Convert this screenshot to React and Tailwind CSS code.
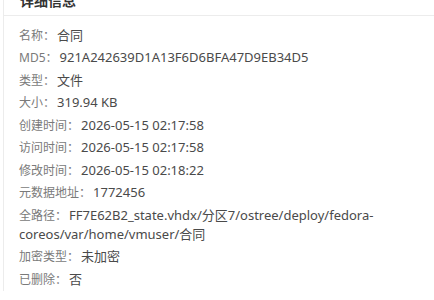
import React from "react";

const rows = [
  { label: "名称：", value: "合同" },
  { label: "MD5：", value: "921A242639D1A13F6D6BFA47D9EB34D5" },
  { label: "类型：", value: "文件" },
  { label: "大小：", value: "319.94 KB" },
  { label: "创建时间：", value: "2026-05-15 02:17:58" },
  { label: "访问时间：", value: "2026-05-15 02:17:58" },
  { label: "修改时间：", value: "2026-05-15 02:18:22" },
  { label: "元数据地址：", value: "1772456" },
  {
    label: "全路径：",
    value: "FF7E62B2_state.vhdx/分区7/ostree/deploy/fedora-coreos/var/home/vmuser/合同",
  },
  { label: "加密类型：", value: "未加密" },
  { label: "已删除：", value: "否" },
];

const App = () => {
  return (
    <div
      className="w-[434px] h-[300px] overflow-hidden bg-white"
      style={{ fontFamily: '"Noto Sans", "Noto Sans CJK SC", sans-serif' }}
    >
      <div className="ml-[3px] h-full border-l border-[#ececec]">
        <div className="-mt-[9px] pl-[16px] pb-[4px] leading-[20px] text-[14px] font-bold text-[#333] border-b border-[#ececec]">
          详细信息
        </div>

        <div className="pl-[15px] pr-[10px] pt-[8px]">
          {rows.map((row) => (
            <p key={row.label} className="py-[1.75px] text-[13px] leading-[19px] break-words">
              <span className="align-top text-[12px] text-[#7a7a7a] mr-[2px]">{row.label}</span>
              <span className="align-top text-[13px] text-[#4a4a4a]">{row.value}</span>
            </p>
          ))}
        </div>
      </div>
    </div>
  );
};

export default App;
